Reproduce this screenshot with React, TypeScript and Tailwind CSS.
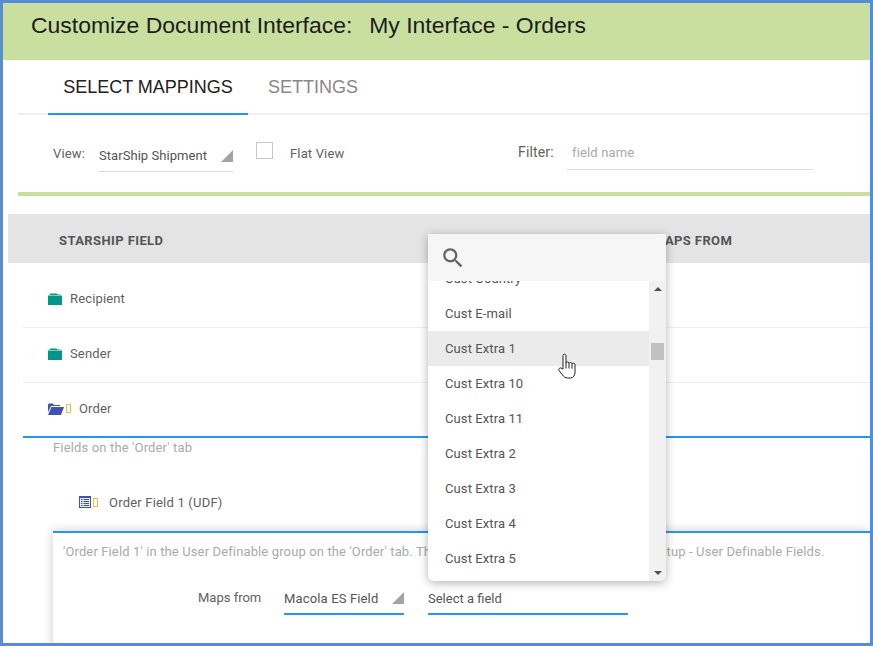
const options = [
  "Cust Country",
  "Cust E-mail",
  "Cust Extra 1",
  "Cust Extra 10",
  "Cust Extra 11",
  "Cust Extra 2",
  "Cust Extra 3",
  "Cust Extra 4",
  "Cust Extra 5",
  "Cust Extra 6",
];

function Corner() {
  return (
    <svg width="12" height="12" viewBox="0 0 12 12" className="shrink-0">
      <polygon points="12,0 12,12 0,12" fill="#a3a3a3" />
    </svg>
  );
}

function ClosedFolder() {
  return (
    <svg width="14" height="12" viewBox="0 0 14 12" className="shrink-0">
      <path d="M0 2.5h14V12H0z" fill="#009688" />
      <path d="M1.5 1.5 2.5 0.5h6l1 1h3v.5h-11z" fill="#009688" />
    </svg>
  );
}

function OpenFolder() {
  return (
    <svg width="16" height="12" viewBox="0 0 16 12" className="shrink-0">
      <path d="M0 9V1.5L1 .5h4l1 1.5h6v1H3L0 9z" fill="#3f51b5" />
      <path d="M3.4 4H16l-3 8H0z" fill="#3f51b5" />
    </svg>
  );
}

function Tofu() {
  return <span className="ml-[2px] h-[9px] w-[5px] shrink-0 border border-[#ffb74d]" />;
}

function FieldIcon() {
  return (
    <svg width="12" height="12" viewBox="0 0 12 12" className="shrink-0">
      <rect x="0" y="0" width="12" height="12" fill="#3f51b5" />
      <rect x="1" y="2" width="10" height="9" fill="#e8eaf6" />
      <path d="M2 3.5h1.5M4.5 3.5H10M2 5.5h1.5M4.5 5.5H10M2 7.5h1.5M4.5 7.5H10M2 9.5h1.5M4.5 9.5H10" stroke="#3f51b5" strokeWidth="1" />
    </svg>
  );
}

function HandCursor() {
  return (
    <svg width="20" height="26" viewBox="0 0 20 26" className="absolute left-[130px] top-[72px]">
      <path
        d="M5 16V2.5c0-1.8 3-1.8 3 0V10c0-1.3 3-1.3 3 0v.5c0-1.3 3-1.3 3 0v.7c0-1.3 3-1.3 3 0V19c0 3-1.5 6-4.5 6H9.5C7.5 25 6 24 4.5 22L1 17.5C.2 16 1.8 14.3 3 15z"
        fill="#ffffff"
        stroke="#222222"
        strokeWidth="1"
        strokeLinejoin="round"
      />
      <path d="M8 10v5.5M11 10.5v5M14 11.2v4.5" stroke="#222222" strokeWidth="1" />
    </svg>
  );
}

function FieldDropdown() {
  return (
    <div className="absolute left-[425px] top-[231px] z-10 flex h-[347px] w-[238px] flex-col overflow-hidden rounded-b-md bg-white tracking-[0.1px] shadow-[0_2px_10px_rgba(0,0,0,0.3)]">
      <div className="flex h-[47px] shrink-0 items-center bg-[#f6f6f6] pl-[12px]">
        <svg width="26" height="26" viewBox="0 0 24 24" fill="#616161">
          <path d="M15.5 14h-.79l-.28-.27C15.41 12.59 16 11.11 16 9.5 16 5.91 13.09 3 9.5 3S3 5.91 3 9.5 5.91 16 9.5 16c1.61 0 3.09-.59 4.23-1.57l.27.28v.79l5 4.99L20.49 19l-4.99-5zm-6 0C7.01 14 5 11.99 5 9.5S7.01 5 9.5 5 14 7.01 14 9.5 11.99 14 9.5 14z" />
        </svg>
      </div>
      <div className="relative flex min-h-0 flex-1">
        <div className="min-w-0 flex-1 overflow-hidden">
          <div className="-mt-[20px]">
            {options.map((name) => (
              <div
                key={name}
                className={
                  name === "Cust Extra 1"
                    ? "flex h-[35px] items-center bg-[#ebebeb] pl-[17px] text-[13px] text-[#555555]"
                    : "flex h-[35px] items-center pl-[17px] text-[13px] text-[#555555]"
                }
              >
                {name}
              </div>
            ))}
          </div>
        </div>
        <div className="flex w-[17px] shrink-0 flex-col items-center justify-between bg-[#f1f1f1] py-[6px]">
          <span className="h-0 w-0 border-x-[4px] border-b-[4px] border-x-transparent border-b-[#505050]" />
          <span className="h-0 w-0 border-x-[4px] border-t-[4px] border-x-transparent border-t-[#505050]" />
        </div>
        <div className="absolute right-[2px] top-[62px] h-[17px] w-[13px] bg-[#c1c1c1]" />
        <HandCursor />
      </div>
    </div>
  );
}

export default function App() {
  return (
    <div
      className="relative h-[646px] w-[873px] overflow-hidden border-[3px] border-[#558ed5] bg-white tracking-[0.15px] text-[#616161]"
      style={{ fontFamily: "Roboto, sans-serif" }}
    >
      <div className="flex h-[57px] items-start whitespace-pre bg-[#c8dfa0] pl-[28px] pt-[5px] font-['Liberation_Sans',sans-serif] text-[22.95px] tracking-normal text-[#1c1c1c]">
        <span>Customize Document Interface:</span>
        <span className="ml-[17px]">My Interface - Orders</span>
      </div>

      <div className="ml-[15px] flex h-[55px] border-b-2 border-[#f0f0f0] pl-[30px] font-['Liberation_Sans',sans-serif] text-[18px] tracking-normal">
        <div className="-mb-[2px] flex h-[55px] w-[200px] items-center justify-center border-b-2 border-[#2196f3] pt-[2px] text-[#212121]">
          SELECT MAPPINGS
        </div>
        <div className="ml-[20px] flex h-[53px] items-center pt-[2px] text-[#888888]">SETTINGS</div>
      </div>

      <div className="flex h-[77px] items-start whitespace-nowrap pl-[50px] text-[13px]">
        <span className="mt-[29px] w-[32px]">View:</span>
        <div className="ml-[13px] mt-[26px] flex h-[31px] w-[135px] items-center justify-between border-b border-[#dddddd] pb-[1px] pl-[1px]">
          <span className="mt-[1px] tracking-[0.05px] text-[#555555]">StarShip Shipment</span>
          <Corner />
        </div>
        <span className="ml-[23px] mt-[27px] h-[17px] w-[17px] border border-[#c8c8c8]" />
        <span className="ml-[17px] mt-[29px] w-[53px]">Flat View</span>
        <span className="ml-[175px] mt-[27px] w-[36px] text-[14px]">Filter:</span>
        <div className="ml-[13px] mt-[24px] h-[31px] w-[246px] border-b border-[#dddddd] pl-[5px] pt-[4px] text-[#aaaaaa]">
          field name
        </div>
      </div>

      <div className="ml-[15px] h-[4px] bg-[#c8dfa0]" />

      <div className="ml-[5px] mt-[18px] flex h-[49px] items-center bg-[#e4e4e4] pl-[51px] pt-[5px] text-[13px] font-bold tracking-[0.4px] text-[#555555]">
        <span className="w-[594px]">STARSHIP FIELD</span>
        <span>MAPS FROM</span>
      </div>

      <div className="ml-[20px] text-[13px]">
        <div className="flex h-[65px] items-center gap-[8px] border-b border-[#eeeeee] pl-[25px] pt-[8px]">
          <ClosedFolder />
          <span>Recipient</span>
        </div>
        <div className="flex h-[55px] items-center gap-[8px] border-b border-[#eeeeee] pb-[2px] pl-[25px]">
          <ClosedFolder />
          <span>Sender</span>
        </div>
        <div className="flex h-[55px] items-center border-b-2 border-[#2196f3] pb-[2px] pl-[25px]">
          <OpenFolder />
          <Tofu />
          <span className="ml-[8px]">Order</span>
        </div>
        <div className="pl-[30px] text-[#aaaaaa]">Fields on the &#39;Order&#39; tab</div>
        <div className="mt-[35px] flex items-center pl-[56px]">
          <FieldIcon />
          <Tofu />
          <span className="ml-[11px] tracking-[0.2px]">Order Field 1 (UDF)</span>
        </div>
      </div>

      <div className="ml-[50px] mt-[19px] h-[120px] border-t-2 border-[#2196f3] bg-white pl-[10px] pt-[9px] text-[13px] shadow-[0_0_10px_rgba(0,0,0,0.2)]">
        <div className="whitespace-nowrap tracking-[0.13px] text-[#aaaaaa]">
          &#39;Order Field 1&#39; in the User Definable group on the &#39;Order&#39; tab. The label can be changed in Company&#39;s Setup - User Definable Fields.
        </div>
        <div className="mt-[24px] flex items-start whitespace-nowrap">
          <span className="ml-[135px] mt-[2px] w-[62px] tracking-normal">Maps from</span>
          <div className="ml-[24px] flex h-[29px] w-[120px] items-start justify-between border-b-2 border-[#2196f3]">
            <span className="mt-[3px] text-[#555555]">Macola ES Field</span>
            <span className="mt-[6px]"><Corner /></span>
          </div>
          <div className="ml-[24px] h-[29px] w-[200px] border-b-2 border-[#2196f3] pt-[3px] tracking-normal text-[#555555]">
            Select a field
          </div>
        </div>
      </div>

      <FieldDropdown />
    </div>
  );
}
